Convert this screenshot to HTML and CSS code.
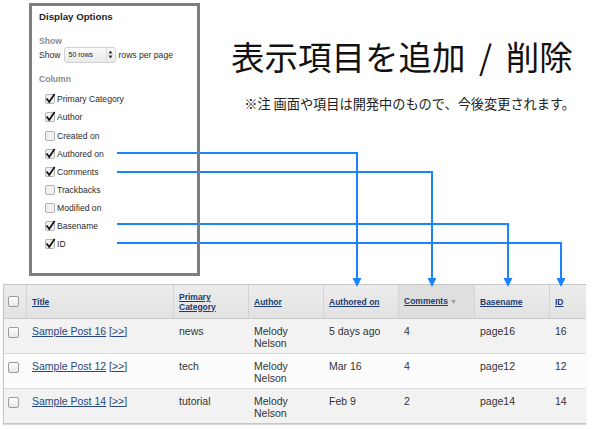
FILE: index.html
```html
<!DOCTYPE html>
<html lang="ja">
<head>
<meta charset="utf-8">
<title>Display Options</title>
<link rel="stylesheet" href="styles.css">
</head>
<body>
<div class="page">
  <div class="top">
    <div class="panel">
      <div class="panel-title">Display Options</div>
      <div class="panel-label">Show</div>
      <div class="show-row">
        <span>Show</span>
        <span class="select">
          <span class="select-text">50 rows</span>
          <span class="select-arrows"><svg width="5" height="9" viewBox="0 0 5 9"><path d="M2.5 0.5 L4.5 3.5 H0.5 Z M2.5 8.5 L4.5 5.5 H0.5 Z" fill="#333"/></svg></span>
        </span>
        <span>rows per page</span>
      </div>
      <div class="panel-label column-label">Column</div>
      <ul class="col-list">
        <li><svg class="cb" viewBox="0 0 12 12"><rect x="1.5" y="1.5" width="9" height="9" rx="1.5" class="cb-box"/><path d="M2.6 5.4 L5.2 9 L10.6 1" class="cb-check"/></svg>Primary Category</li>
        <li><svg class="cb" viewBox="0 0 12 12"><rect x="1.5" y="1.5" width="9" height="9" rx="1.5" class="cb-box"/><path d="M2.6 5.4 L5.2 9 L10.6 1" class="cb-check"/></svg>Author</li>
        <li><svg class="cb" viewBox="0 0 12 12"><rect x="1.5" y="1.5" width="9" height="9" rx="1.5" class="cb-box"/></svg>Created on</li>
        <li><svg class="cb" viewBox="0 0 12 12"><rect x="1.5" y="1.5" width="9" height="9" rx="1.5" class="cb-box"/><path d="M2.6 5.4 L5.2 9 L10.6 1" class="cb-check"/></svg>Authored on</li>
        <li><svg class="cb" viewBox="0 0 12 12"><rect x="1.5" y="1.5" width="9" height="9" rx="1.5" class="cb-box"/><path d="M2.6 5.4 L5.2 9 L10.6 1" class="cb-check"/></svg>Comments</li>
        <li><svg class="cb" viewBox="0 0 12 12"><rect x="1.5" y="1.5" width="9" height="9" rx="1.5" class="cb-box"/></svg>Trackbacks</li>
        <li><svg class="cb" viewBox="0 0 12 12"><rect x="1.5" y="1.5" width="9" height="9" rx="1.5" class="cb-box"/></svg>Modified on</li>
        <li><svg class="cb" viewBox="0 0 12 12"><rect x="1.5" y="1.5" width="9" height="9" rx="1.5" class="cb-box"/><path d="M2.6 5.4 L5.2 9 L10.6 1" class="cb-check"/></svg>Basename</li>
        <li><svg class="cb" viewBox="0 0 12 12"><rect x="1.5" y="1.5" width="9" height="9" rx="1.5" class="cb-box"/><path d="M2.6 5.4 L5.2 9 L10.6 1" class="cb-check"/></svg>ID</li>
      </ul>
    </div>
    <div class="headline">
      <h1 class="title">表示項目を追加 / 削除</h1>
      <p class="note">※注 画面や項目は開発中のもので、今後変更されます。</p>
    </div>
  </div>

  <table class="grid">
    <colgroup>
      <col class="c-check">
      <col class="c-title">
      <col class="c-mid">
      <col class="c-mid">
      <col class="c-mid">
      <col class="c-wide">
      <col class="c-mid">
      <col class="c-id">
    </colgroup>
    <thead>
      <tr>
        <th class="check-cell"><span class="tcb"></span></th>
        <th><a href="#">Title</a></th>
        <th><a href="#">Primary<br>Category</a></th>
        <th><a href="#">Author</a></th>
        <th><a href="#">Authored on</a></th>
        <th class="sorted"><a href="#">Comments</a><span class="sort-arrow">▼</span></th>
        <th><a href="#">Basename</a></th>
        <th><a href="#">ID</a></th>
      </tr>
    </thead>
    <tbody>
      <tr class="odd">
        <td class="check-cell"><span class="tcb"></span></td>
        <td><a href="#">Sample Post 16</a> <span class="view">[<a href="#">&gt;&gt;</a>]</span></td>
        <td>news</td>
        <td>Melody<br>Nelson</td>
        <td>5 days ago</td>
        <td>4</td>
        <td>page16</td>
        <td>16</td>
      </tr>
      <tr class="even">
        <td class="check-cell"><span class="tcb"></span></td>
        <td><a href="#">Sample Post 12</a> <span class="view">[<a href="#">&gt;&gt;</a>]</span></td>
        <td>tech</td>
        <td>Melody<br>Nelson</td>
        <td>Mar 16</td>
        <td>4</td>
        <td>page12</td>
        <td>12</td>
      </tr>
      <tr class="odd">
        <td class="check-cell"><span class="tcb"></span></td>
        <td><a href="#">Sample Post 14</a> <span class="view">[<a href="#">&gt;&gt;</a>]</span></td>
        <td>tutorial</td>
        <td>Melody<br>Nelson</td>
        <td>Feb 9</td>
        <td>2</td>
        <td>page14</td>
        <td>14</td>
      </tr>
    </tbody>
  </table>

  <svg class="arrows" width="592" height="429" viewBox="0 0 592 429">
    <g fill="none" stroke="#1a84ff" stroke-width="2">
      <path d="M117 153 H357 V280"/>
      <path d="M117 172 H432 V280"/>
      <path d="M117 224 H508 V280"/>
      <path d="M117 243 H561 V280"/>
    </g>
    <g fill="#1a84ff">
      <path d="M352.5 278 H361.5 L357 287 Z"/>
      <path d="M427.5 278 H436.5 L432 287 Z"/>
      <path d="M503.5 278 H512.5 L508 287 Z"/>
      <path d="M556.5 278 H565.5 L561 287 Z"/>
    </g>
  </svg>
</div>
</body>
</html>
```

FILE: styles.css
```css
* { box-sizing: border-box; }

html, body {
  margin: 0;
  padding: 0;
  background: #ffffff;
}

body {
  font-family: "Liberation Sans", Arial, sans-serif;
  color: #333333;
}

.page {
  position: relative;
  width: 592px;
  height: 429px;
  overflow: hidden;
}

.top {
  display: flex;
  height: 284px;
}

/* ---------- Display options panel ---------- */
.panel {
  position: relative;
  z-index: 2;
  flex: none;
  margin: 3px 0 0 29px;
  width: 171px;
  height: 273px;
  border: 3px solid #7e7e7e;
  padding: 4.5px 0 0 7px;
}

.panel-title {
  font-weight: bold;
  font-size: 9.7px;
  line-height: 12px;
  color: #1e1e1e;
}

.panel-label {
  margin-top: 13.3px;
  font-weight: bold;
  font-size: 8.6px;
  line-height: 11px;
  color: #8c8c8c;
}

.column-label {
  margin-top: 10.8px;
}

.show-row {
  display: flex;
  align-items: center;
  gap: 3px;
  height: 16px;
  font-size: 8.6px;
  color: #2a2a2a;
}

.select {
  display: flex;
  align-items: center;
  width: 52px;
  height: 16px;
  border: 1px solid #d2d2d2;
  border-radius: 3px;
  background: linear-gradient(#fbfbfb, #e9e9e9);
}

.select-text {
  flex: 1;
  padding-left: 4px;
  font-size: 7px;
  color: #222;
}

.select-arrows {
  display: flex;
  align-items: center;
  justify-content: center;
  width: 9px;
  height: 100%;
  border-left: 1px solid #dcdcdc;
}

.col-list {
  list-style: none;
  margin: 5.7px 0 0 0;
  padding: 0;
}

.col-list li {
  display: flex;
  align-items: center;
  gap: 1px;
  height: 18.1px;
  padding-left: 5px;
  font-size: 8.6px;
  color: #2a2a2a;
}

.cb {
  width: 12px;
  height: 12px;
  flex: none;
  overflow: visible;
}

.cb-box {
  fill: #f1f1f1;
  stroke: #b2b2b2;
  stroke-width: 1;
}

.cb-check {
  fill: none;
  stroke: #111;
  stroke-width: 1.7;
  stroke-linejoin: miter;
}

/* ---------- Heading ---------- */
.headline {
  display: flex;
  flex-direction: column;
  margin-left: 31px;
  width: 344px;
}

.title {
  margin: 38.5px 0 0 0;
  font-family: "Noto Sans CJK JP", sans-serif;
  font-weight: normal;
  font-size: 33.5px;
  line-height: 33.5px;
  color: #111;
  white-space: nowrap;
  word-spacing: 6px;
}

.note {
  margin: 23.5px 0 0 0;
  font-family: "Noto Sans CJK JP", sans-serif;
  font-size: 13.2px;
  line-height: 15px;
  color: #222;
  text-align: right;
  white-space: nowrap;
}

/* ---------- Table ---------- */
.grid {
  margin-left: 3px;
  width: 583px;
  table-layout: fixed;
  border-collapse: separate;
  border-spacing: 0;
  border-top: 1px solid #c6c6c6;
  border-left: 1px solid #c6c6c6;
  border-bottom: 1px solid #c6c6c6;
  box-shadow: 0 1px 1px rgba(0, 0, 0, 0.15);
  font-size: 10.5px;
  color: #333;
}

.c-check { width: 22px; }
.c-title { width: 147px; }
.c-mid { width: 75px; }
.c-wide { width: 76px; }
.c-id { width: 37px; }

.grid th {
  height: 34px;
  padding: 0 0 0 5px;
  border-left: 1px solid #d3d3d3;
  border-bottom: 1px solid #cacaca;
  background: linear-gradient(#ececec, #e2e2e2);
  text-align: left;
  vertical-align: middle;
  font-size: 8.5px;
  line-height: 10px;
  font-weight: bold;
}

.grid th.check-cell {
  border-left: none;
  padding-left: 4px;
}

.grid th.sorted {
  background: #dfdfdf;
}

.grid th a {
  color: #1d3d73;
  text-decoration: underline;
}

.sort-arrow {
  margin-left: 2px;
  font-size: 7px;
  color: #9a9a9a;
}

.grid td {
  height: 35px;
  padding: 7px 0 0 6px;
  border-bottom: 1px solid #dadada;
  vertical-align: top;
  line-height: 11.5px;
}

.grid tbody tr:last-child td {
  border-bottom: none;
  height: 34px;
}

.grid td.check-cell {
  padding-left: 4px;
  padding-top: 8px;
}

.grid tr.odd td { background: #f2f2f2; }
.grid tr.even td { background: #fcfcfc; }

.grid td a {
  color: #27477f;
  text-decoration: underline;
}

.view {
  color: #2a3f66;
}

.tcb {
  display: block;
  width: 11px;
  height: 11px;
  border: 1px solid #9c9c9c;
  border-radius: 2px;
  background: linear-gradient(#ffffff, #e6e6e6);
}

/* ---------- Connector arrows (diagram overlay) ---------- */
.arrows {
  position: absolute;
  top: 0;
  left: 0;
  z-index: 1;
  pointer-events: none;
}
```
